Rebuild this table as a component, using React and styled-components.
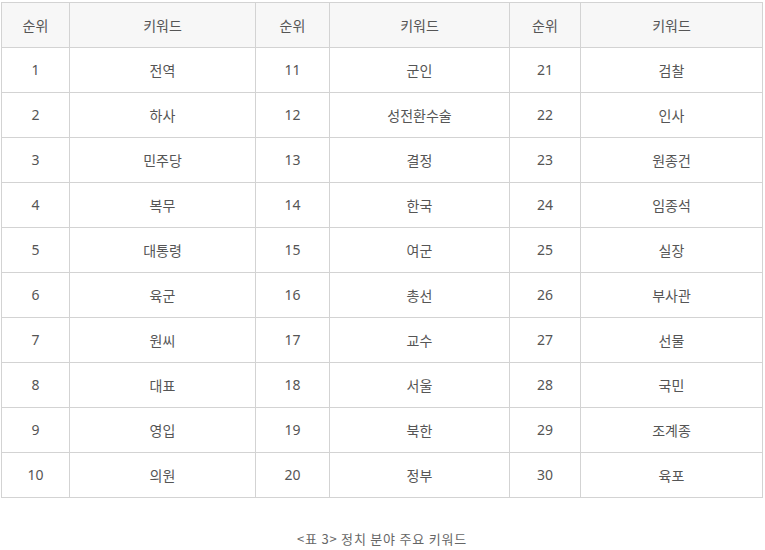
import React from "react";
import styled, { createGlobalStyle } from "styled-components";

const Global = createGlobalStyle`
  html, body { margin: 0; padding: 0; background: #fff; }
  body { font-family: "Malgun Gothic", "Noto Sans CJK KR", "Noto Sans", sans-serif; }
`;

const Wrap = styled.div`
  width: 765px;
  padding: 2px 0 0 1px;
  box-sizing: border-box;
`;

const Table = styled.table`
  width: 761px;
  border-collapse: collapse;
  table-layout: fixed;
  border: 1px solid #d3d3d3;
`;

const Th = styled.th`
  height: 43px;
  padding: 0 0 1px;
  background: #f7f7f7;
  border: 1px solid #d3d3d3;
  font-weight: 400;
  font-size: 14px;
  color: #555;
  text-align: center;
`;

const Td = styled.td`
  height: 43px;
  padding: 0 0 1px;
  border: 1px solid #d3d3d3;
  font-size: 14px;
  color: #555;
  text-align: center;
  font-family: ${(p) => (p.$num ? '"Noto Sans", "Noto Sans CJK KR", sans-serif' : 'inherit')};
`;

const Caption = styled.p`
  margin: 31px 0 0;
  width: 762px;
  text-align: center;
  font-size: 13px;
  letter-spacing: 0.8px;
  color: #666;
`;

const widths = [68, 186, 74, 180, 71, 182];

const data = [
  ["전역", "군인", "검찰"],
  ["하사", "성전환수술", "인사"],
  ["민주당", "결정", "원종건"],
  ["복무", "한국", "임종석"],
  ["대통령", "여군", "실장"],
  ["육군", "총선", "부사관"],
  ["원씨", "교수", "선물"],
  ["대표", "서울", "국민"],
  ["영입", "북한", "조계종"],
  ["의원", "정부", "육포"],
];

export default function App() {
  return (
    <Wrap>
      <Global />
      <Table>
        <colgroup>
          {widths.map((w, i) => (
            <col key={i} style={{ width: w }} />
          ))}
        </colgroup>
        <thead>
          <tr>
            <Th>순위</Th>
            <Th>키워드</Th>
            <Th>순위</Th>
            <Th>키워드</Th>
            <Th>순위</Th>
            <Th>키워드</Th>
          </tr>
        </thead>
        <tbody>
          {data.map((row, i) => (
            <tr key={i}>
              <Td $num>{i + 1}</Td>
              <Td>{row[0]}</Td>
              <Td $num>{i + 11}</Td>
              <Td>{row[1]}</Td>
              <Td $num>{i + 21}</Td>
              <Td>{row[2]}</Td>
            </tr>
          ))}
        </tbody>
      </Table>
      <Caption>&lt;표 3&gt; 정치 분야 주요 키워드</Caption>
    </Wrap>
  );
}
